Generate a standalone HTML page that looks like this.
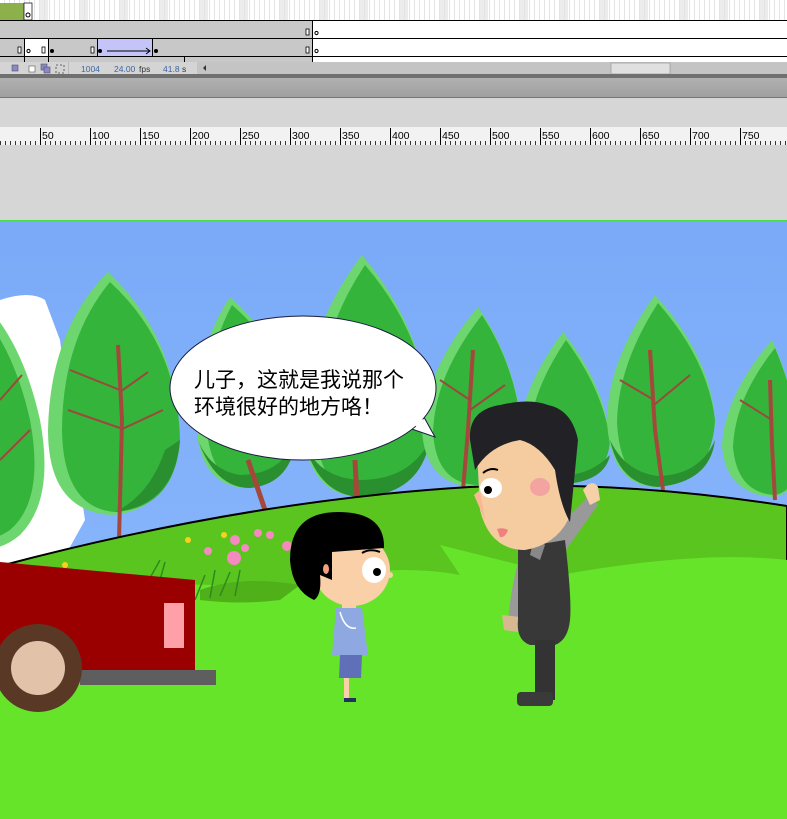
<!DOCTYPE html>
<html><head><meta charset="utf-8"><style>
html,body{margin:0;padding:0;width:787px;height:819px;overflow:hidden;background:#d6d6d6;font-family:"Liberation Sans",sans-serif}
svg{position:absolute;left:0;top:0}
</style></head><body>
<svg width="787" height="819" viewBox="0 0 787 819" xmlns="http://www.w3.org/2000/svg">
<defs>
<pattern id="fr" x="0" y="0" width="5" height="20" patternUnits="userSpaceOnUse"><line x1="4.5" y1="0" x2="4.5" y2="20" stroke="#e4e4e4" stroke-width="1"/></pattern>
<pattern id="tk" x="0" y="127" width="5" height="18" patternUnits="userSpaceOnUse"><line x1="0.5" y1="14" x2="0.5" y2="18" stroke="#333"/></pattern>
<linearGradient id="sky" x1="0" y1="0" x2="0" y2="1"><stop offset="0" stop-color="#7aaaf8"/><stop offset="0.55" stop-color="#86b4fb"/><stop offset="1" stop-color="#b8d2ff"/></linearGradient>
<linearGradient id="bar" x1="0" y1="0" x2="0" y2="1"><stop offset="0" stop-color="#b0b0b0"/><stop offset="1" stop-color="#a0a0a0"/></linearGradient>
</defs>
<rect x="0" y="0" width="787" height="20" fill="#fff"/>
<g fill="#ececec"><rect x="40" y="0" width="8" height="20"/><rect x="80" y="0" width="8" height="20"/><rect x="120" y="0" width="8" height="20"/><rect x="160" y="0" width="8" height="20"/><rect x="200" y="0" width="8" height="20"/><rect x="240" y="0" width="8" height="20"/><rect x="280" y="0" width="8" height="20"/><rect x="320" y="0" width="8" height="20"/><rect x="360" y="0" width="8" height="20"/><rect x="400" y="0" width="8" height="20"/><rect x="440" y="0" width="8" height="20"/><rect x="480" y="0" width="8" height="20"/><rect x="520" y="0" width="8" height="20"/><rect x="560" y="0" width="8" height="20"/><rect x="600" y="0" width="8" height="20"/><rect x="640" y="0" width="8" height="20"/><rect x="680" y="0" width="8" height="20"/><rect x="720" y="0" width="8" height="20"/><rect x="760" y="0" width="8" height="20"/></g>
<rect x="0" y="0" width="787" height="20" fill="url(#fr)"/>
<rect x="0" y="3" width="24" height="17" fill="#8cb04a"/>
<rect x="24" y="3" width="8" height="17" fill="#fff" stroke="#000" stroke-width="0.7"/>
<circle cx="28" cy="15" r="2" fill="none" stroke="#000"/>
<rect x="0" y="20" width="312" height="36" fill="#c8c8c8"/>
<rect x="312" y="20" width="475" height="42" fill="#fff"/>
<rect x="24" y="38" width="24" height="18" fill="#fff"/>
<rect x="97" y="38" width="55" height="18" fill="#c4c4f8"/>
<rect x="0" y="56" width="312" height="6" fill="#c8c8c8"/>
<g stroke="#000" stroke-width="1"><line x1="0" y1="20.5" x2="787" y2="20.5"/><line x1="0" y1="38.5" x2="787" y2="38.5"/><line x1="0" y1="56.5" x2="787" y2="56.5"/><line x1="312.5" y1="20" x2="312.5" y2="62"/><line x1="24.5" y1="38" x2="24.5" y2="62"/><line x1="48.5" y1="38" x2="48.5" y2="62"/><line x1="97.5" y1="38" x2="97.5" y2="56"/><line x1="152.5" y1="38" x2="152.5" y2="56"/><line x1="184.5" y1="56" x2="184.5" y2="62"/></g>
<g fill="#fff" stroke="#000" stroke-width="0.8"><rect x="306" y="29" width="3" height="6"/><rect x="306" y="47" width="3" height="6"/><rect x="18" y="47" width="3" height="6"/><rect x="42" y="47" width="3" height="6"/><rect x="91" y="47" width="3" height="6"/></g>
<g fill="none" stroke="#000"><circle cx="316.5" cy="33" r="1.6"/><circle cx="316.5" cy="51" r="1.6"/><circle cx="28.5" cy="51" r="1.6"/></g>
<g fill="#000"><circle cx="52" cy="51" r="2"/><circle cx="100" cy="51" r="2"/><circle cx="156" cy="51" r="2"/></g>
<line x1="107" y1="51" x2="150" y2="51" stroke="#000"/><path d="M146 48 L150 51 L146 54" fill="none" stroke="#000"/>
<rect x="0" y="62" width="787" height="13" fill="#d4d4d4"/>
<rect x="197" y="62" width="590" height="12" fill="#c4c4c4"/>
<rect x="611" y="63" width="59" height="11" fill="#e0e0e0" stroke="#999" stroke-width="0.7"/>
<path d="M203 68 L206 65 L206 71 Z" fill="#333"/>
<g fill="#8888cc" stroke="#555" stroke-width="0.6"><rect x="12" y="65" width="6" height="6"/><rect x="29" y="66" width="6" height="6" fill="#fff"/><rect x="41" y="64" width="6" height="6"/><rect x="44" y="67" width="6" height="6"/></g>
<rect x="56" y="65" width="8" height="8" fill="none" stroke="#444" stroke-width="0.8" stroke-dasharray="2 2"/>
<g font-size="8.5" font-family="Liberation Sans,sans-serif"><text x="81" y="72" fill="#3a66a8">1004</text><text x="114" y="72" fill="#3a66a8">24.00</text><text x="139" y="72" fill="#333">fps</text><text x="163" y="72" fill="#3a66a8">41.8</text><text x="182" y="72" fill="#333">s</text></g>
<line x1="68.5" y1="62" x2="68.5" y2="75" stroke="#bbb"/>
<rect x="0" y="74" width="787" height="4" fill="#707070"/>
<rect x="0" y="78" width="787" height="19" fill="url(#bar)"/>
<rect x="0" y="97" width="787" height="1" fill="#777"/>
<rect x="0" y="127" width="787" height="18" fill="#f2f2f2"/>
<rect x="0" y="127" width="787" height="18" fill="url(#tk)"/>
<g stroke="#000"><line x1="40.5" y1="128" x2="40.5" y2="145"/><line x1="90.5" y1="128" x2="90.5" y2="145"/><line x1="140.5" y1="128" x2="140.5" y2="145"/><line x1="190.5" y1="128" x2="190.5" y2="145"/><line x1="240.5" y1="128" x2="240.5" y2="145"/><line x1="290.5" y1="128" x2="290.5" y2="145"/><line x1="340.5" y1="128" x2="340.5" y2="145"/><line x1="390.5" y1="128" x2="390.5" y2="145"/><line x1="440.5" y1="128" x2="440.5" y2="145"/><line x1="490.5" y1="128" x2="490.5" y2="145"/><line x1="540.5" y1="128" x2="540.5" y2="145"/><line x1="590.5" y1="128" x2="590.5" y2="145"/><line x1="640.5" y1="128" x2="640.5" y2="145"/><line x1="690.5" y1="128" x2="690.5" y2="145"/><line x1="740.5" y1="128" x2="740.5" y2="145"/></g>
<g font-size="10.5" fill="#000" font-family="Liberation Sans,sans-serif"><text x="42" y="139">50</text><text x="92" y="139">100</text><text x="142" y="139">150</text><text x="192" y="139">200</text><text x="242" y="139">250</text><text x="292" y="139">300</text><text x="342" y="139">350</text><text x="392" y="139">400</text><text x="442" y="139">450</text><text x="492" y="139">500</text><text x="542" y="139">550</text><text x="592" y="139">600</text><text x="642" y="139">650</text><text x="692" y="139">700</text><text x="742" y="139">750</text></g>
<rect x="0" y="220" width="787" height="1" fill="#44dd44"/>
<rect x="0" y="221" width="787" height="598" fill="url(#sky)"/>
<path d="M0 300 Q30 290 45 300 L60 340 Q70 420 85 520 L60 565 L0 565 Z" fill="#fff"/>
<path d="M-30 290 Q20 330 40 420 Q55 500 20 535 Q-10 560 -40 540 Z" fill="#6ed66e"/>
<path d="M-30 300 Q12 340 30 420 Q45 500 10 530 Q-20 550 -40 530 Z" fill="#34b43a"/>
<path d="M0 460 L30 430 M0 400 L22 375" stroke="#9a4a3c" stroke-width="2"/>
<path d="M108 272 Q50 330 48 430 Q48 510 110 515 Q170 512 178 440 Q180 340 108 272 Z" fill="#6ed66e"/>
<path d="M110 282 Q62 340 62 432 Q64 508 115 512 Q175 508 180 440 Q178 345 110 282 Z" fill="#34b43a"/>
<path d="M180 440 Q175 505 115 512 Q150 495 165 450 Z" fill="#2a8f2e"/>
<path d="M118 345 L122 420 L119 540" stroke="#a5483c" stroke-width="4" fill="none"/>
<path d="M120 390 L70 370 M120 392 L148 372 M120 428 L68 410 M120 430 L163 410" stroke="#9a4a3c" stroke-width="2"/>
<path d="M230 297 Q195 350 196 420 Q198 485 245 488 Q295 482 296 420 Q290 350 230 297 Z" fill="#6ed66e"/>
<path d="M232 305 Q205 355 206 422 Q210 484 248 486 Q298 480 296 420 Q290 355 232 305 Z" fill="#34b43a"/>
<path d="M198 440 Q215 488 250 488 Q290 484 296 440 Q280 475 240 475 Q210 470 198 440 Z" fill="#2a8f2e"/>
<path d="M248 460 L265 510" stroke="#a5483c" stroke-width="5"/>
<path d="M362 255 Q305 330 302 420 Q305 495 360 497 Q425 495 430 420 Q425 330 362 255 Z" fill="#6ed66e"/>
<path d="M365 265 Q318 335 315 422 Q318 493 362 495 Q428 492 430 420 Q425 335 365 265 Z" fill="#34b43a"/>
<path d="M305 445 Q320 495 360 497 Q420 495 430 440 Q410 480 360 480 Q320 478 305 445 Z" fill="#2a8f2e"/>
<path d="M355 460 L357 500" stroke="#a5483c" stroke-width="5"/>
<path d="M478 307 Q425 370 422 430 Q425 485 475 487 Q520 482 522 430 Q515 360 478 307 Z" fill="#6ed66e"/>
<path d="M482 315 Q435 375 433 432 Q436 484 478 485 Q522 480 522 430 Q515 365 482 315 Z" fill="#34b43a"/>
<path d="M473 350 L468 430 L463 490" stroke="#a5483c" stroke-width="4" fill="none"/>
<path d="M470 400 L440 380 M470 410 L505 385" stroke="#9a4a3c" stroke-width="2"/>
<path d="M563 332 Q520 390 518 440 Q522 483 565 485 Q607 480 610 440 Q605 385 563 332 Z" fill="#6ed66e"/>
<path d="M566 340 Q530 393 528 442 Q532 482 567 483 Q608 478 610 440 Q603 390 566 340 Z" fill="#34b43a"/>
<path d="M530 455 Q540 483 567 484 Q605 480 610 455 Q590 475 565 475 Q540 472 530 455 Z" fill="#2a8f2e"/>
<path d="M565 470 L570 495" stroke="#a5483c" stroke-width="4"/>
<path d="M655 295 Q608 360 607 420 Q610 485 655 487 Q712 482 715 420 Q710 355 655 295 Z" fill="#6ed66e"/>
<path d="M658 303 Q618 365 617 422 Q620 483 658 485 Q712 480 715 420 Q708 360 658 303 Z" fill="#34b43a"/>
<path d="M610 440 Q620 485 658 487 Q710 482 715 440 Q700 475 658 476 Q625 472 610 440 Z" fill="#2a8f2e"/>
<path d="M650 350 L655 430 L663 490" stroke="#a5483c" stroke-width="4" fill="none"/>
<path d="M654 400 L620 380 M654 405 L690 375" stroke="#9a4a3c" stroke-width="2"/>
<path d="M772 340 Q725 395 722 445 Q725 493 772 497 Q800 495 800 445 Q795 390 772 340 Z" fill="#6ed66e"/>
<path d="M775 348 Q735 398 733 447 Q737 493 775 495 Q800 490 800 445 Q795 395 775 348 Z" fill="#34b43a"/>
<path d="M770 380 L772 445 L775 500" stroke="#a5483c" stroke-width="4" fill="none"/>
<path d="M772 420 L740 400" stroke="#9a4a3c" stroke-width="2"/>
<path d="M0 566 Q250 500 470 487 Q620 480 787 506 L787 819 L0 819 Z" fill="#5bc51f" stroke="#000" stroke-width="2"/>
<path d="M0 600 Q150 575 280 590 Q380 560 460 575 L440 545 Q500 560 560 575 Q700 550 787 560 L787 819 L0 819 Z" fill="#66e42a"/>
<path d="M200 590 Q240 575 300 585 L280 600 Q240 605 200 600 Z" fill="#4fb01a"/>
<g fill="#f58ac0"><circle cx="235" cy="540" r="5"/><circle cx="234" cy="558" r="7"/><circle cx="258" cy="533" r="4"/><circle cx="270" cy="535" r="4"/><circle cx="245" cy="548" r="4"/><circle cx="287" cy="546" r="5"/><circle cx="208" cy="551" r="4"/></g>
<g fill="#f8d020"><circle cx="188" cy="540" r="3"/><circle cx="224" cy="535" r="3"/><circle cx="65" cy="565" r="3"/></g>
<g stroke="#2d8a1e" stroke-width="1.5" fill="none"><path d="M195 600 L205 575 M210 598 L215 570 M220 596 L230 572 M235 596 L240 570 M150 578 L160 560 M160 580 L165 562"/></g>
<path d="M0 562 L195 580 L195 670 L0 670 Z" fill="#9a0000"/>
<rect x="164" y="603" width="20" height="45" fill="#ffa0a8"/>
<rect x="80" y="670" width="136" height="15" fill="#5e5e5e"/>
<circle cx="38" cy="668" r="44" fill="#5a3826"/>
<circle cx="38" cy="668" r="27" fill="#e2c2a8"/>
<path d="M400 425 L435 437 L420 410 Z" fill="#fff" stroke="#1a1a40" stroke-width="1"/>
<ellipse cx="303" cy="388" rx="133" ry="72" fill="#fff" stroke="#1a1a40" stroke-width="1"/>
<path d="M402 418 L433 436 L418 412 Z" fill="#fff"/>
<g font-size="21" fill="#000" font-family="Liberation Sans,'Noto Sans CJK SC',sans-serif"><text x="194" y="387">儿子，这就是我说那个</text><text x="194" y="414">环境很好的地方咯！</text></g>
<rect x="342" y="600" width="14" height="10" fill="#f9d0a8"/>
<path d="M336 608 L362 608 L368 655 L332 655 Z" fill="#8ea8e2"/>
<path d="M340 655 L362 655 L361 678 L339 678 Z" fill="#6070b8"/>
<rect x="344" y="678" width="5" height="22" fill="#f9d0a8"/>
<rect x="344" y="698" width="12" height="4" fill="#243060"/>
<path d="M340 612 Q345 630 356 628" stroke="#fff" stroke-width="1.5" fill="none"/>
<ellipse cx="352" cy="570" rx="38" ry="36" fill="#f9d0a8"/>
<path d="M290 560 Q290 512 338 512 Q385 512 384 548 L332 552 L332 580 L320 575 Q322 595 314 600 Q292 590 290 560 Z" fill="#000"/>
<ellipse cx="374" cy="570" rx="12" ry="13" fill="#fff"/>
<circle cx="377" cy="572" r="4" fill="#000"/>
<path d="M362 553 Q370 548 380 552" stroke="#000" stroke-width="2" fill="none"/>
<circle cx="390" cy="575" r="3" fill="#f9d0a8"/>
<ellipse cx="326" cy="569" rx="3" ry="5" fill="#f3a080"/>
<path d="M540 545 L590 495 L598 505 L555 565 Z" fill="#999"/>
<path d="M583 490 Q592 478 598 487 L600 500 L590 505 Z" fill="#f5d0a8"/>
<path d="M520 555 Q510 590 508 625 L520 628 L530 560 Z" fill="#9a9a9a"/>
<path d="M502 615 L520 617 L518 632 L504 630 Z" fill="#d8b890"/>
<path d="M518 548 L565 540 Q572 600 570 620 Q568 640 555 645 L530 645 Q516 640 518 620 Z" fill="#383838"/>
<path d="M535 535 L545 545 L540 560 L530 555 Z" fill="#888"/>
<rect x="535" y="640" width="20" height="60" fill="#333"/>
<rect x="517" y="692" width="36" height="14" rx="4" fill="#3a3a3a"/>
<path d="M478 470 Q474 440 500 425 Q540 420 565 450 Q575 490 568 520 Q555 545 525 550 Q490 550 480 510 Z" fill="#f5cca0"/>
<path d="M470 440 Q468 410 500 405 Q530 398 548 405 Q572 410 578 440 L570 522 Q560 505 555 470 Q540 445 520 440 Q490 445 475 470 Z" fill="#222226"/>
<path d="M480 490 L474 495 L485 520 Z" fill="#f8b898"/>
<ellipse cx="491" cy="488" rx="11" ry="10" fill="#fff"/>
<circle cx="488" cy="490" r="4" fill="#000"/>
<path d="M483 473 Q490 467 498 470" stroke="#000" stroke-width="2" fill="none"/>
<ellipse cx="540" cy="487" rx="10" ry="9" fill="#f4a4a0"/>
<path d="M497 529 Q503 527 508 530 Q505 538 500 537 Z" fill="#f08080"/>
</svg>
</body></html>
